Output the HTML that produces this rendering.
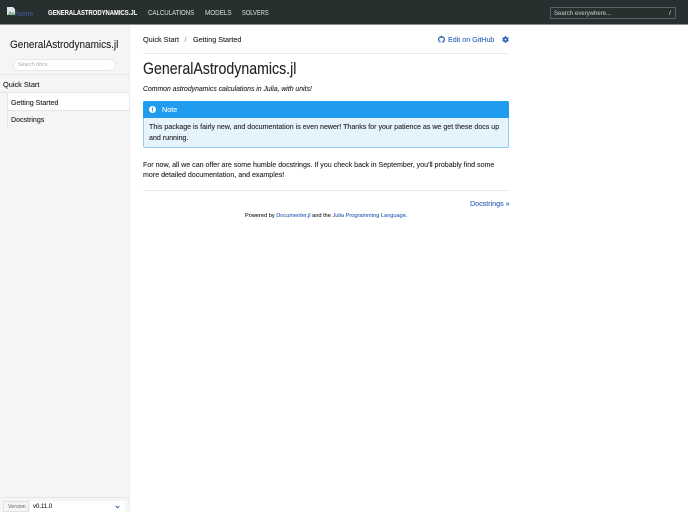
<!DOCTYPE html>
<html lang="en">
<head>
<meta charset="utf-8">
<title>GeneralAstrodynamics.jl</title>
<style>
html,body{margin:0;padding:0;width:688px;height:512px;overflow:hidden;background:#fff}
body{font-family:"Liberation Sans",sans-serif;color:#222}
#w{position:relative;width:688px;height:512px;overflow:hidden;background:#fff;filter:blur(.25px)}
.a{position:absolute;display:block}
.t{position:absolute;white-space:nowrap;display:block;transform-origin:0 50%;text-decoration:none;-webkit-text-stroke:.1px}
a.t{color:#2e63b8}
</style>
</head>
<body>
<div id="w">
<div class="a" style="left:0;top:0;width:688px;height:24px;background:#282f2f"></div>
<div class="a" style="left:0;top:24px;width:688px;height:1px;background:#8a8f8f"></div>

<svg class="a" style="left:7px;top:7px" width="9" height="9" viewBox="0 0 9 9"><path d="M0 0h6l2 2v6H0z" fill="#dfe4ea"/><path d="M1 7l2-3 2 2 1-1 2 2v1H1z" fill="#8fb58f"/></svg>
<a class="t" style="left:15px;top:7.500px;font-size:7.400px;line-height:11px;color:#3c5a9c">home</a>
<a class="t" style="left:48px;top:8px;font-size:7px;line-height:11px;color:#f2f4f4;font-weight:700;transform:scaleX(.84)">GENERALASTRODYNAMICS.JL</a>
<a class="t" style="left:148px;top:8px;font-size:7px;line-height:11px;color:#c8cccc;transform:scaleX(.87)">CALCULATIONS</a>
<a class="t" style="left:205px;top:8px;font-size:7px;line-height:11px;color:#c8cccc;transform:scaleX(.9)">MODELS</a>
<a class="t" style="left:242px;top:8px;font-size:7px;line-height:11px;color:#c8cccc;transform:scaleX(.82)">SOLVERS</a>

<div class="a" style="left:550px;top:7px;width:124px;height:10px;border:1px solid #566466;border-radius:1px"></div>
<span class="t" style="left:554px;top:7.500px;font-size:6.500px;line-height:11px;color:#b5bbbb;transform:scaleX(.93)">Search everywhere...</span>
<span class="t" style="left:669px;top:7.500px;font-size:6.500px;line-height:11px;color:#c8cccc">/</span>

<div class="a" style="left:0;top:25px;width:129px;height:487px;background:#f5f5f5;box-shadow:1px 0 0 #ececec"></div>
<span class="t" style="left:10px;top:37.500px;font-size:11.300px;line-height:14px;color:#222;transform:scaleX(.885)">GeneralAstrodynamics.jl</span>
<div class="a" style="left:13px;top:59px;width:101px;height:10px;background:#fff;border:1px solid #e8e8e8;border-radius:6px"></div>
<span class="t" style="left:18px;top:60px;font-size:5.300px;line-height:10px;color:#a8a8a8;-webkit-text-stroke:0">Search docs</span>
<div class="a" style="left:0;top:74px;width:129px;height:1px;background:#e6e6e6"></div>
<span class="t" style="left:3px;top:78.500px;font-size:7.600px;line-height:12px;color:#222;transform:scaleX(.97)">Quick Start</span>
<div class="a" style="left:0;top:92px;width:129px;height:1px;background:#e6e6e6"></div>
<div class="a" style="left:8px;top:93px;width:121px;height:17px;background:#fff"></div>
<div class="a" style="left:8px;top:110px;width:121px;height:1px;background:#e6e6e6"></div>
<div class="a" style="left:7px;top:93px;width:1px;height:35px;background:#e6e6e6"></div>
<span class="t" style="left:11px;top:96.500px;font-size:7.200px;line-height:12px;color:#222;transform:scaleX(.98)">Getting Started</span>
<span class="t" style="left:11px;top:114px;font-size:7.200px;line-height:12px;color:#222;transform:scaleX(.98)">Docstrings</span>

<div class="a" style="left:0;top:497px;width:129px;height:1px;background:#e6e6e6"></div>
<div class="a" style="left:3px;top:501px;width:26px;height:11px;background:#f5f5f5;border:1px solid #e2e2e2;box-sizing:border-box"></div>
<span class="t" style="left:8px;top:502px;font-size:5.600px;line-height:11px;color:#666;transform:scaleX(.95);-webkit-text-stroke:0">Version</span>
<div class="a" style="left:30px;top:501px;width:95px;height:11px;background:#fff"></div>
<span class="t" style="left:33px;top:501.500px;font-size:6px;line-height:11px;color:#222">v0.11.0</span>
<svg class="a" style="left:115px;top:505px" width="5" height="4" viewBox="0 0 5 4"><path d="M.7 1l1.800 1.800L4.300 1" fill="none" stroke="#2e63b8" stroke-width="1"/></svg>

<a class="t" style="left:143px;top:33.500px;font-size:7.500px;line-height:12px;color:#222;transform:scaleX(.97)">Quick Start</a>
<span class="t" style="left:184.500px;top:33.500px;font-size:7.500px;line-height:12px;color:#999">/</span>
<a class="t" style="left:193px;top:33.500px;font-size:7.500px;line-height:12px;color:#222;transform:scaleX(.96)">Getting Started</a>

<svg class="a" style="left:438px;top:35.500px" width="7" height="7" viewBox="0 0 16 16"><path fill="#2e63b8" d="M8 0C3.580 0 0 3.580 0 8c0 3.540 2.290 6.530 5.470 7.590.4.070.55-.17.55-.38v-1.340c-2.220.48-2.690-1.070-2.690-1.070-.36-.92-.89-1.170-.89-1.170-.73-.5.05-.49.05-.49.8.06 1.230.83 1.230.83.71 1.220 1.870.87 2.330.66.070-.52.28-.87.5-1.070-1.770-.2-3.640-.89-3.640-3.950 0-.87.31-1.590.82-2.150-.08-.2-.36-1.020.08-2.120 0 0 .67-.21 2.200.82a7.600 7.600 0 0 1 4 0c1.530-1.040 2.200-.82 2.200-.82.44 1.100.16 1.920.08 2.120.51.56.82 1.270.82 2.150 0 3.070-1.870 3.750-3.650 3.950.29.25.54.73.54 1.480v2.200c0 .21.15.46.55.38A8 8 0 0 0 16 8c0-4.420-3.580-8-8-8z"/></svg>
<a class="t" style="left:448px;top:33.500px;font-size:7.400px;line-height:12px;transform:scaleX(.965)">Edit on GitHub</a>
<svg class="a" style="left:502px;top:35.500px" width="7" height="7" viewBox="0 0 16 16"><circle cx="8" cy="8" r="4.300" fill="none" stroke="#2e63b8" stroke-width="3.800"/><path d="M8 0v16M1 4l14 8M1 12l14-8" stroke="#2e63b8" stroke-width="2.600"/><circle cx="8" cy="8" r="2.100" fill="#fff"/></svg>
<div class="a" style="left:143px;top:53px;width:366px;height:1px;background:#ececec"></div>

<h1 class="t" style="margin:0;left:143px;top:59px;font-size:16.600px;line-height:20px;font-weight:400;color:#222;transform:scaleX(.853)">GeneralAstrodynamics.jl</h1>
<em class="t" style="left:143px;top:84px;font-size:7px;line-height:11px;color:#222;transform:scaleX(.977)">Common astrodynamics calculations in Julia, with units!</em>

<div class="a" style="left:143px;top:101px;width:364px;height:45px;border:1px solid #8fcdf5;border-radius:2px;background:#e5f3fd"></div>
<div class="a" style="left:143px;top:101px;width:366px;height:17px;background:#209cee;border-radius:2px 2px 0 0"></div>
<svg class="a" style="left:149px;top:106px" width="7" height="7" viewBox="0 0 16 16"><circle cx="8" cy="8" r="8" fill="#fff"/><rect x="6.800" y="3" width="2.400" height="6.500" fill="#209cee"/><rect x="6.800" y="10.500" width="2.400" height="2.400" fill="#209cee"/></svg>
<span class="t" style="left:162px;top:104px;font-size:7.600px;line-height:12px;color:#fff;transform:scaleX(.95)">Note</span>
<span class="t" style="left:149px;top:122px;font-size:7.100px;line-height:11px;color:#222;transform:scaleX(.997)">This package is fairly new, and documentation is even newer! Thanks for your patience as we get these docs up</span>
<span class="t" style="left:149px;top:133px;font-size:7.100px;line-height:11px;color:#222">and running.</span>

<span class="t" style="left:143px;top:158.500px;font-size:7.300px;line-height:11px;color:#222;transform:scaleX(.97)">For now, all we can offer are some humble docstrings. If you check back in September, you'll probably find some</span>
<span class="t" style="left:143px;top:169px;font-size:7.300px;line-height:11px;color:#222;transform:scaleX(.97)">more detailed documentation, and examples!</span>

<div class="a" style="left:143px;top:190px;width:366px;height:1px;background:#e8e8e8"></div>
<a class="t" style="left:470px;top:198px;font-size:7.500px;line-height:11px;transform:scaleX(.95)">Docstrings »</a>
<span class="t" style="left:245px;top:211px;font-size:5.700px;line-height:10px;color:#222;transform:scaleX(.988)">Powered by <span style="color:#2e63b8">Documenter.jl</span> and the <span style="color:#2e63b8">Julia Programming Language</span>.</span>
</div>
</body>
</html>
